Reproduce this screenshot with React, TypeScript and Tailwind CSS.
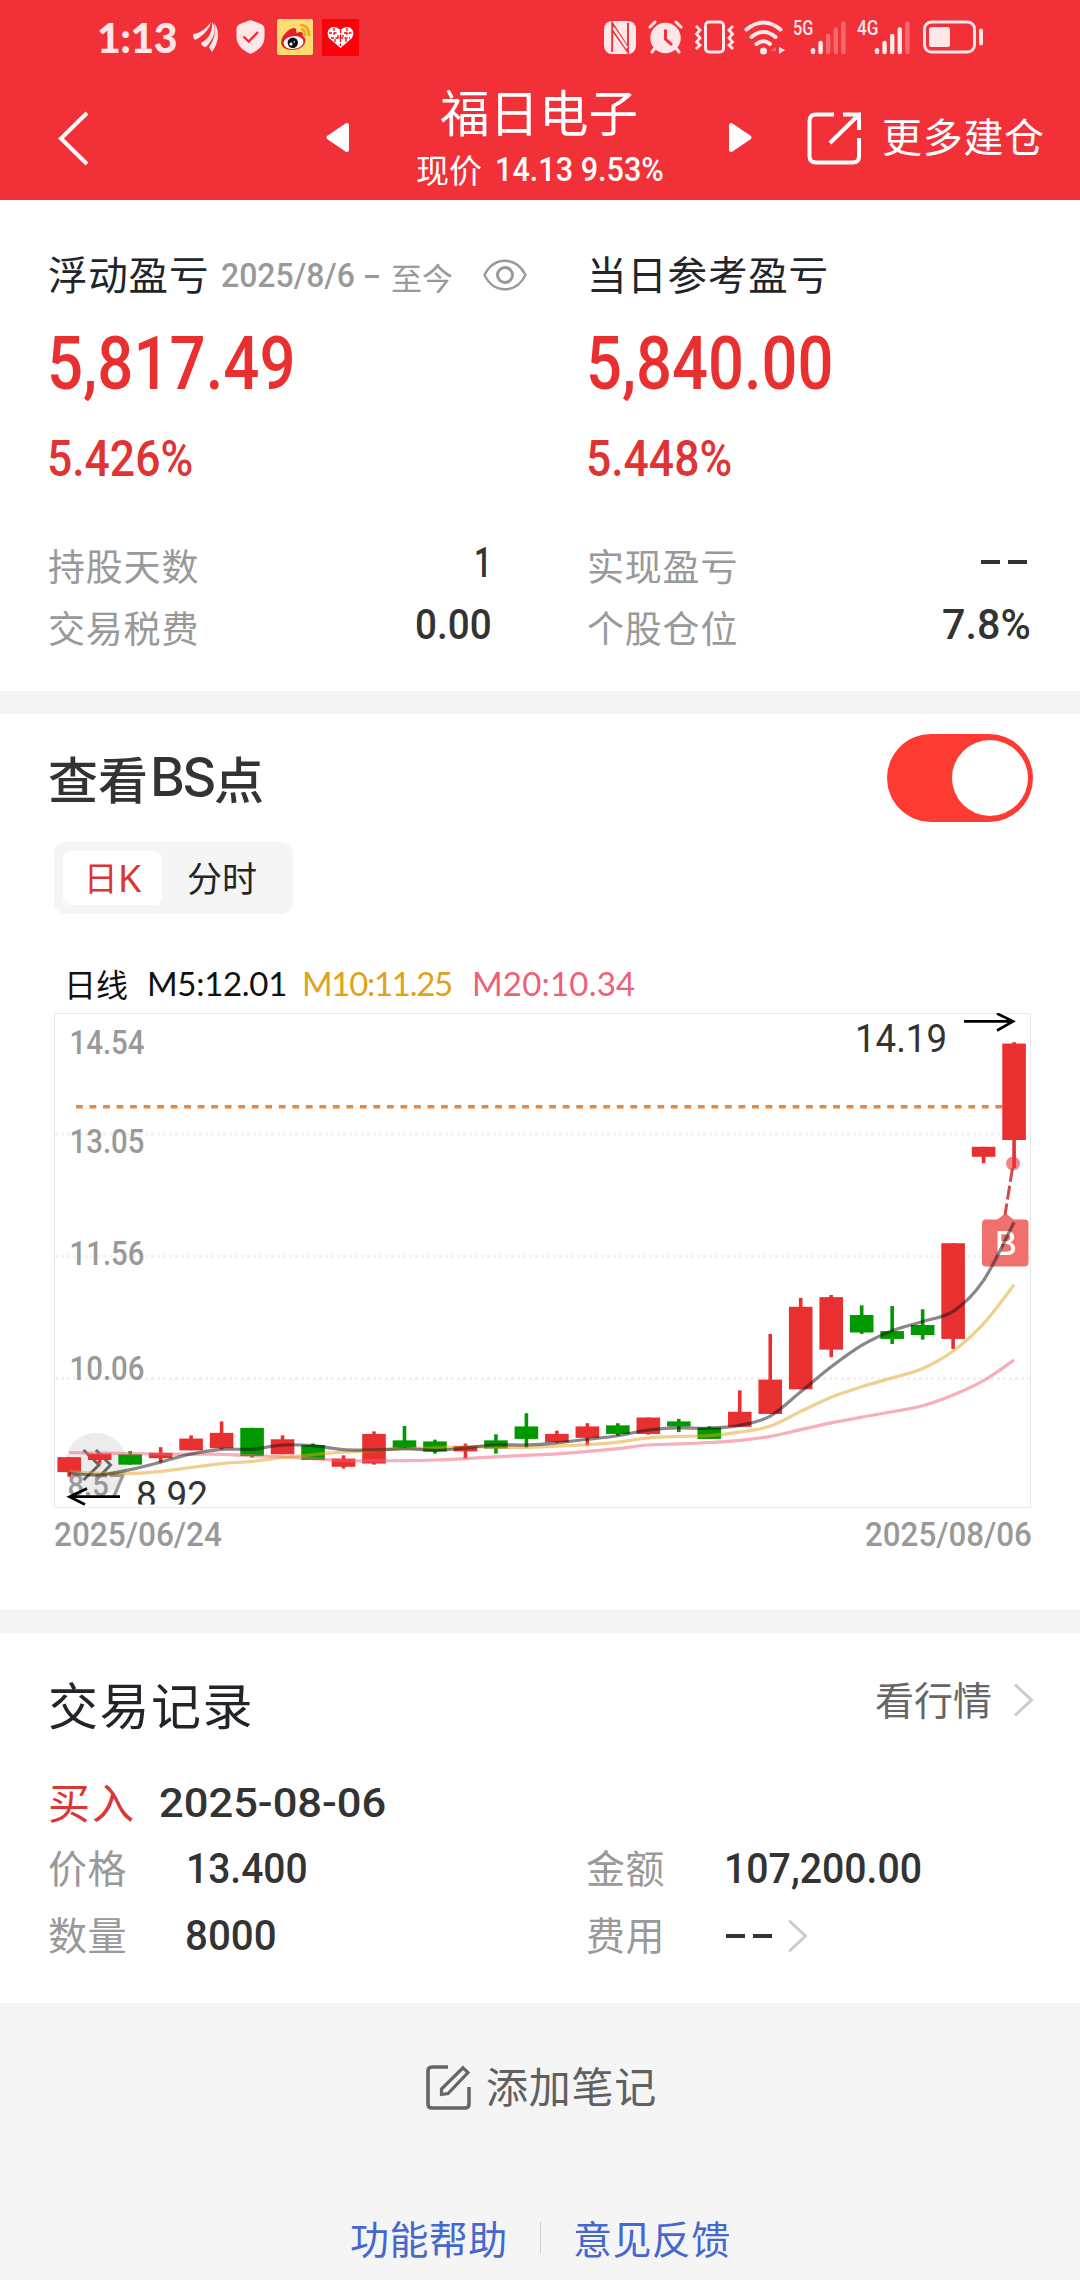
import React from "react";

const ADVANCE: Record<string, number> = {
  ".": 0.276, ",": 0.214, "%": 0.737, "/": 0.39, "-": 0.36, " ": 0.25, "–": 0.56,
};

/* Condensed figures: text of a given size squeezed to the given ink width. */
function Num({ text, size, width, className = "" }: { text: string; size: number; width: number; className?: string }) {
  const natural = [...text].reduce((sum, c) => sum + (ADVANCE[c] ?? 0.568), 0) * size;
  const bearing = size * 0.045;
  const k = width / (natural - bearing * 2);
  return (
    <span className={"block shrink-0 whitespace-nowrap font-['Roboto',sans-serif] font-medium leading-none " + className} style={{ width, fontSize: size }}>
      <span className="block origin-left" style={{ transform: `scaleX(${k})`, marginLeft: -bearing * k }}>{text}</span>
    </span>
  );
}

function Dashes({ className = "" }: { className?: string }) {
  return (
    <span className={"flex gap-2 " + className} aria-label="--">
      <span className="h-[4px] w-[19px] bg-[#333]" />
      <span className="h-[4px] w-[19px] bg-[#333]" />
    </span>
  );
}

function Bars({ lit }: { lit: number }) {
  return (
    <svg width="36" height="36" viewBox="0 0 36 36" stroke="#fff" strokeWidth="4.4" strokeLinecap="round">
      {[31.2, 24, 17, 10.5, 4.5].map((y, i) => (
        <line key={i} x1={3 + i * 7.6} x2={3 + i * 7.6} y1={y} y2="33" opacity={i < lit ? 0.9 : 0.28} />
      ))}
    </svg>
  );
}

function StatusBar() {
  return (
    <div className="flex h-[74px] items-center pl-[97px] text-[#ffe6e8]">
      <span className="w-[83px] font-['Lato',sans-serif] text-[41px] font-black leading-none tracking-[-0.5px]">1:13</span>
      <svg className="ml-[12px]" width="27" height="32" viewBox="0 0 27 32" fill="currentColor">
        <path d="M1 13C10 12 15 6 19 1C17 10 9 16 3 19Q1 17 1 13Z" />
        <path d="M9 22C17 18 21 10 20 1C25 8 22 18 14 26Q10 26 9 22Z" />
        <path d="M17 26C22 20 24 12 22 2C28 9 27 22 20 31Z" />
      </svg>
      <svg className="ml-[17px]" width="29" height="34" viewBox="0 0 29 34">
        <path d="M14.5 0L25 4Q28.5 5.500 28.500 9V17C28.500 26 21 31 14.500 34C8 31 .5 26 .5 17V9Q.5 5.500 4 4Z" fill="currentColor" />
        <path d="M7.500 16.500L12.700 21.500L22 12" fill="none" stroke="#f02f38" strokeWidth="2.400" />
      </svg>
      <svg className="ml-[12px]" width="36" height="36" viewBox="0 0 36 36">
        <rect width="36" height="36" rx="2" fill="#fedc72" />
        <path d="M23 6Q32 6 32 17M24 10Q28.500 10.500 28 17" fill="none" stroke="#e8a92a" strokeWidth="2.600" />
        <path d="M17 9C20 9 19 13 19.500 14C24 12 27 13 25.500 17C30 19 29 25 25 28C20 32 10 32 6 28C0 21 11 9 17 9Z" fill="#e31f27" />
        <ellipse cx="16.500" cy="23.500" rx="10" ry="6.400" fill="#fff" transform="rotate(-6 16.500 23.500)" />
        <circle cx="15.800" cy="23.800" r="5.200" fill="#111" />
        <circle cx="14" cy="25" r="1.600" fill="#fff" />
        <circle cx="17.300" cy="23" r=".8" fill="#fff" />
      </svg>
      <svg className="ml-[9px]" width="37" height="37" viewBox="0 0 37 37">
        <rect width="37" height="37" fill="#f9020a" />
        <path d="M18.500 29L7 19Q3.500 12 9 8.500Q14 6.500 18.500 11Q23 6.500 28 8.500Q33.500 12 30 19Z" fill="#fff" />
        <path d="M18.500 11V27M7 14H15M22 14H31M9 19H28M12 9V16M25 9V16M13 20V24M24 20V24M16 16V19H21V16" fill="none" stroke="#f9020a" strokeWidth="1.300" strokeDasharray="3 1.500" />
      </svg>

      <svg className="ml-[245px]" width="32" height="33" viewBox="0 0 32 33">
        <rect width="32" height="33" rx="8" fill="currentColor" />
        <path d="M8.200 31V2L24 26.500V9M8.200 9L24 31V2" fill="none" stroke="#f02f38" strokeWidth="1.900" />
        <path d="M9.500 7L23 27" stroke="currentColor" strokeWidth="2.500" />
      </svg>
      <svg className="ml-[12px]" width="35" height="34" viewBox="0 0 35 34">
        <g stroke="currentColor" strokeWidth="3" strokeLinecap="round"><path d="M2 7L7 2M33 7L28 2M7 28L4 32M28 28L31 32" /></g>
        <circle cx="17.500" cy="18" r="15.200" fill="currentColor" />
        <path d="M17.500 9.500V19L24 25" fill="none" stroke="#f02f38" strokeWidth="3" />
      </svg>
      <svg className="ml-[11px]" width="41" height="34" viewBox="0 0 41 34" fill="none" stroke="currentColor" strokeWidth="3">
        <rect x="11.500" y="2" width="18" height="30" rx="3.500" />
        <path d="M2 6L6 10L2.500 14L6 18L2.500 22L6 25L2 29M39 6L35 10L38.500 14L35 18L38.500 22L35 25L39 29" strokeWidth="2.800" />
      </svg>
      <svg className="ml-[9px]" width="41" height="35" viewBox="0 0 41 35" fill="none" stroke="currentColor" strokeWidth="4" strokeLinecap="round">
        <path d="M2.500 9.500Q19.500 -4.500 36.500 9.500M7.500 17Q19.500 7 31.500 17M12.500 24Q19.500 18.500 26 24" />
        <circle cx="19.500" cy="31" r="3.500" fill="currentColor" stroke="none" />
        <path d="M35 27L41 30L35 34Z" fill="currentColor" stroke="none" />
        <path d="M32 27L26 31H32V34Z" fill="currentColor" stroke="none" opacity=".35" />
      </svg>
      <Num text="5G" size={21} width={17} className="mb-[18px] ml-[9px] font-bold" />
      <div className="-ml-px"><Bars lit={2} /></div>
      <Num text="4G" size={21} width={18} className="mb-[18px] ml-[12px] font-bold" />
      <div className="-ml-[2px]"><Bars lit={4} /></div>
      <svg className="ml-[13px]" width="60" height="34" viewBox="0 0 60 34">
        <rect x="1.500" y="2" width="50" height="30" rx="7" fill="none" stroke="currentColor" strokeWidth="3" />
        <rect x="6" y="7" width="21" height="20" rx="2.500" fill="currentColor" />
        <rect x="56" y="8.500" width="4" height="17" rx="2" fill="currentColor" />
      </svg>
    </div>
  );
}

function Header() {
  return (
    <header className="h-[200px] bg-[#f23038] text-white">
      <StatusBar />
      <div className="flex h-[126px] items-start">
        <svg className="ml-[57px] mt-[37px]" width="34" height="56" viewBox="0 0 34 56" fill="none" stroke="#fff" strokeWidth="4">
          <path d="M30 2L4 27.500L30 53" />
        </svg>
        <svg className="ml-[234px] mt-[48px]" width="25" height="31" viewBox="0 0 25 31"><path d="M3.500 15.500L22 3V28Z" fill="#fff" stroke="#fff" strokeWidth="4" strokeLinejoin="round" /></svg>
        <div className="mt-[10px] flex w-[380px] flex-col items-center pr-[2px]">
          <div className="text-[49.500px] leading-[54px]">福日电子</div>
          <div className="mt-[11px] flex h-[40px] items-center gap-[14px]">
            <span className="text-[33px] leading-[40px]">现价</span>
            <Num text="14.13 9.53%" size={33} width={166} />
          </div>
        </div>
        <svg className="ml-[-2px] mt-[48px]" width="25" height="31" viewBox="0 0 25 31"><path d="M21.500 15.500L3 3V28Z" fill="#fff" stroke="#fff" strokeWidth="4" strokeLinejoin="round" /></svg>
        <svg className="ml-[54px] mt-[37px]" width="55" height="55" viewBox="0 0 55 55" fill="none" stroke="#fff" strokeWidth="4">
          <path d="M27 3.500H9Q2.500 3.500 2.500 10V45Q2.500 51.500 9 51.500H46Q52 51.500 52 45V27" />
          <path d="M36 3.500H52V19M52 3.500L23 32" />
        </svg>
        <div className="ml-[20px] mt-[34px] text-[40px] leading-[54px] tracking-[0.7px]">更多建仓</div>
      </div>
    </header>
  );
}

function Row({ label, children }: { label: string; children: React.ReactNode }) {
  return (
    <div className="mb-[2px] flex h-[60px] items-center justify-between pr-[1px]">
      <span className="text-[37px] leading-none tracking-[0.8px] text-[#999]">{label}</span>
      <div className="mb-[6px] text-[#333]">{children}</div>
    </div>
  );
}

function Summary() {
  return (
    <section className="grid h-[491px] grid-cols-[443px_443px] gap-[96px] bg-white px-12 pt-[48px]">
      <div>
        <div className="flex h-[50px] items-center whitespace-nowrap">
          <span className="w-[174px] shrink-0 text-[39.500px] leading-none tracking-[0.8px] text-[#212529]">浮动盈亏</span>
          <div className="mt-[6px] flex w-[232px] shrink-0 items-center text-[#999]">
            <Num text="2025/8/6" size={33.500} width={131} />
            <span className="ml-[12px] h-[3px] w-[14px] bg-[#999]" />
            <span className="ml-[12px] text-[31px] leading-none">至今</span>
          </div>
          <svg className="ml-[29px] mt-[4px] shrink-0" width="44" height="32" viewBox="0 0 44 32" fill="none" stroke="#999" strokeWidth="2.400">
            <path d="M1.500 16C11 -3 33 -3 42.500 16C33 35 11 35 1.500 16Z" />
            <circle cx="22" cy="16" r="7.500" strokeWidth="3" />
          </svg>
        </div>
        <div className="mt-[26px] flex h-[80px] items-center pl-[2px] text-[#e93030]"><Num text="5,817.49" size={74} width={242} /></div>
        <div className="mb-[46px] mt-[25px] flex h-[60px] items-center pl-[1px] text-[#e03434]"><Num text="5.426%" size={50} width={142} /></div>
        <Row label="持股天数"><Num text="1" size={43} width={15} /></Row>
        <Row label="交易税费"><Num text="0.00" size={43} width={73} /></Row>
      </div>
      <div>
        <div className="flex h-[50px] items-center text-[39.500px] leading-none tracking-[0.8px] text-[#212529]">当日参考盈亏</div>
        <div className="mt-[26px] flex h-[80px] items-center pl-[2px] text-[#e93030]"><Num text="5,840.00" size={74} width={241} /></div>
        <div className="mb-[46px] mt-[25px] flex h-[60px] items-center pl-[1px] text-[#e03434]"><Num text="5.448%" size={50} width={142} /></div>
        <Row label="实现盈亏"><Dashes className="pr-[2px]" /></Row>
        <Row label="个股仓位"><Num text="7.8%" size={43} width={85} /></Row>
      </div>
    </section>
  );
}

type Candle = [number, number, number, number, "r" | "g"];
/* body top, body bottom, wick top, wick bottom */
const CANDLES: Candle[] = [
  [1280, 1322, 1280, 1335, "r"], [1270, 1288, 1270, 1298, "r"], [1272, 1301, 1263, 1301, "g"], [1268, 1283, 1252, 1295, "r"],
  [1228, 1261, 1219, 1261, "r"], [1212, 1255, 1180, 1258, "r"], [1198, 1277, 1198, 1281, "g"], [1230, 1272, 1219, 1272, "r"],
  [1246, 1288, 1242, 1288, "g"], [1284, 1307, 1275, 1312, "r"], [1215, 1298, 1208, 1301, "r"], [1233, 1253, 1193, 1253, "g"],
  [1236, 1264, 1231, 1270, "g"], [1249, 1264, 1242, 1284, "r"], [1233, 1256, 1216, 1270, "g"], [1194, 1229, 1157, 1253, "g"],
  [1215, 1238, 1206, 1240, "r"], [1194, 1226, 1185, 1247, "r"], [1191, 1215, 1185, 1220, "g"], [1169, 1215, 1169, 1217, "r"],
  [1180, 1194, 1173, 1210, "g"], [1197, 1229, 1194, 1229, "g"], [1153, 1195, 1093, 1195, "r"], [1063, 1159, 935, 1159, "r"],
  [859, 1090, 834, 1090, "r"], [832, 979, 826, 1000, "r"], [882, 931, 855, 935, "g"], [927, 949, 857, 963, "g"],
  [910, 938, 866, 951, "g"], [681, 949, 681, 977, "r"], [411, 439, 411, 457, "r"], [122, 392, 118, 470, "r"],
];
const MA5 = [1325, 1330, 1315, 1294, 1271, 1258, 1258, 1246, 1248, 1259, 1260, 1256, 1261, 1254, 1246, 1246, 1240, 1230, 1220, 1204, 1198, 1199, 1191, 1165, 1097, 1027, 967, 926, 900, 872, 785, 622];
const MA10 = [1320, 1325, 1326, 1320, 1309, 1298, 1292, 1281, 1273, 1266, 1262, 1256, 1254, 1251, 1252, 1253, 1249, 1245, 1238, 1226, 1222, 1220, 1210, 1193, 1152, 1112, 1083, 1058, 1032, 983, 906, 797];
const MA20 = [1267, 1269, 1270, 1271, 1272, 1272, 1276, 1279, 1284, 1290, 1290, 1290, 1288, 1284, 1279, 1275, 1271, 1264, 1256, 1246, 1243, 1239, 1233, 1222, 1203, 1184, 1168, 1153, 1136, 1106, 1066, 1008];

const cx = (i: number) => 15.2 + i * 30.48;
const cy = (v: number) => v / 2.8 - 13;

function smooth(values: number[]) {
  const p = values.map((v, i) => [cx(i), cy(v)]);
  let d = `M${p[0][0]} ${p[0][1]}`;
  for (let i = 0; i < p.length - 1; i++) {
    const a = p[i - 1] ?? p[i], b = p[i], c = p[i + 1], e = p[i + 2] ?? c;
    d += `C${b[0] + (c[0] - a[0]) / 6} ${b[1] + (c[1] - a[1]) / 6} ${c[0] - (e[0] - b[0]) / 6} ${c[1] - (e[1] - b[1]) / 6} ${c[0]} ${c[1]}`;
  }
  return d;
}

function Chart() {
  const labels: [string, number][] = [["14.54", 41], ["13.05", 140], ["11.56", 252], ["10.06", 367]];
  return (
    <svg className="block font-['Roboto',sans-serif]" width="977" height="495" viewBox="0 0 977 495">
      <rect x=".5" y=".5" width="976" height="494" fill="#fff" stroke="#e9e9e9" strokeWidth="1" />
      {[121.3, 243.4, 365.6].map((y) => (
        <line key={y} x1="1" x2="976" y1={y} y2={y} stroke="#f2f2f2" strokeWidth="3" strokeDasharray="3 3" />
      ))}
      <line x1="22" x2="948" y1="93.800" y2="93.800" stroke="#e8883a" strokeWidth="3.400" strokeDasharray="6.800 6.720" />
      <g fill="#999" fontWeight="500" fontSize="33">
        {labels.map(([t, y]) => (
          <text key={t} x="15.500" y={y} textLength="75" lengthAdjust="spacingAndGlyphs">{t}</text>
        ))}
      </g>
      <circle cx="42.300" cy="451" r="31" fill="#ececec" />
      <path d="M29.500 437L45 452L29.500 467M42 437L56.500 452L42 467" fill="none" stroke="#666" strokeWidth="3" />
      <text x="13.500" y="482.500" fontSize="31" fontWeight="500" fill="#999" textLength="58" lengthAdjust="spacingAndGlyphs">8.57</text>

      <g fill="#f0706e">
        <path d="M943 207L951.500 200L960 207Z" />
        <rect x="928" y="206.500" width="46.500" height="47" rx="4" />
        <circle cx="959" cy="150.500" r="7" opacity=".85" />
      </g>
      <text x="941" y="242.400" fontSize="33" fontWeight="500" fill="#fff" fontFamily="Inter">B</text>
      {CANDLES.map(([t, b, wt, wb, c], i) => (
        <g key={i} fill={c === "r" ? "#e93030" : "#009a00"}>
          <rect x={cx(i) - 1.8} y={cy(wt)} width="3.600" height={cy(wb) - cy(wt)} />
          <rect x={cx(i) - 11.8} y={cy(t)} width="23.600" height={cy(b) - cy(t)} />
        </g>
      ))}
      <path d="M958.500 155L951 202" stroke="#d04a4c" strokeWidth="3" strokeDasharray="14 4" />
      <g fill="none" strokeWidth="3.200">
        <path d={smooth(MA20)} stroke="#ed6078" strokeOpacity=".5" />
        <path d={smooth(MA10)} stroke="#e0a21b" strokeOpacity=".5" />
        <path d={smooth(MA5)} stroke="#111" strokeOpacity=".5" />
      </g>

      <g fill="none" stroke="#000" strokeWidth="2.700">
        <path d="M910 8.400H959M943 .5L959 8.400L943 17.500" />
        <path d="M66 483.700H15.500M33 475.500L15.500 483.700L31 491.500" />
      </g>
      <g fill="#333" fontSize="39">
        <text x="801" y="38.500" textLength="92" lengthAdjust="spacingAndGlyphs">14.19</text>
        <svg x="0" y="0" width="300" height="491.500">
          <text x="82" y="496" textLength="72" lengthAdjust="spacingAndGlyphs">8.92</text>
        </svg>
      </g>
    </svg>
  );
}

function ChartSection() {
  return (
    <section className="h-[896px] bg-white px-12">
      <div className="flex h-[128px] items-center justify-between">
        <h2 className="flex items-center pb-[2px] text-[50px] font-medium leading-none text-[#333]">
          查看<span className="ml-[2px] font-['Inter',sans-serif] text-[53px] tracking-[-2.5px]">BS</span><span>点</span>
        </h2>
        <button className="-mr-[1px] flex h-[88px] w-[146px] items-center justify-end rounded-full bg-[#fe3b30] pr-[5px]">
          <span className="h-[76px] w-[76px] rounded-full bg-white" />
        </button>
      </div>
      <div className="ml-[6px] flex h-[72px] w-[239px] items-center rounded-xl bg-[#f5f5f5] px-[9px] text-[34px] leading-none">
        <div className="flex h-[54px] w-[99px] items-center justify-center rounded-lg bg-white pb-[3px] text-[#d93636]">
          日<span className="font-['Noto_Sans',sans-serif] text-[38px]">K</span>
        </div>
        <div className="w-[120px] pb-[3px] text-center text-[35px] text-[#212529]">分时</div>
      </div>
      <div className="ml-[16px] mt-[42px] flex h-[57px] items-center pb-[2px] text-[32px] leading-none text-[#111]">
        <span className="pb-[2px]">日线</span>
        <span className="ml-[19px] w-[155px] font-['Lato',sans-serif] text-[33px] tracking-[-0.3px]">M5:12.01</span>
        <span className="w-[170px] font-['Lato',sans-serif] text-[33px] tracking-[-1.3px] text-[#e0a21b]">M10:11.25</span>
        <span className="font-['Lato',sans-serif] text-[33px] tracking-[0.2px] text-[#ed6078]">M20:10.34</span>
      </div>
      <div className="ml-[6px]">
        <Chart />
        <div className="mt-[10px] flex w-[976px] justify-between pl-[1px] text-[#999]">
          <Num text="2025/06/24" size={33} width={165} />
          <Num text="2025/08/06" size={33} width={164} />
        </div>
      </div>
    </section>
  );
}

function Chevron() {
  return (
    <svg width="22" height="34" viewBox="0 0 22 34" fill="none" stroke="#ccc" strokeWidth="3"><path d="M2 1.500L18.500 17L2 32.500" /></svg>
  );
}

function Field({ label, children }: { label: string; children: React.ReactNode }) {
  return (
    <div className="flex h-[67px] items-center">
      <span className="w-[139px] text-[39px] leading-none tracking-[0.5px] text-[#999]">{label}</span>
      <div className="flex items-center pt-[4px] text-[#333]">{children}</div>
    </div>
  );
}

function Records() {
  return (
    <section className="h-[370px] bg-white px-12">
      <div className="flex h-[142px] items-center justify-between">
        <h2 className="pb-[2px] text-[50px] leading-none tracking-[1.5px] text-[#212529]">交易记录</h2>
        <div className="-mr-[3px] mb-[12px] flex items-center text-[39px] leading-none text-[#666]">看行情<span className="ml-[21px] mt-[4px]"><Chevron /></span></div>
      </div>
      <div className="mt-[-6px] flex h-[64px] items-center">
        <span className="w-[113px] text-[42px] leading-none tracking-[2px] text-[#d93636]">买入</span>
        <Num text="2025-08-06" size={41.500} width={225} className="mt-[4px] text-[#333]" />
      </div>
      <div className="grid grid-cols-[538px_1fr]">
        <Field label="价格"><Num text="13.400" size={43} width={118} className="ml-[1px]" /></Field>
        <Field label="金额"><Num text="107,200.00" size={43} width={194} className="ml-[1px]" /></Field>
        <Field label="数量"><Num text="8000" size={43} width={88} /></Field>
        <Field label="费用"><Dashes className="ml-[1px]" /><span className="ml-[15px]"><Chevron /></span></Field>
      </div>
    </section>
  );
}

function Footer() {
  return (
    <footer className="h-[277px] bg-[#f5f5f5]">
      <div className="flex h-[166px] items-center justify-center gap-[15px] pb-[3px] pl-[3px]">
        <svg className="mt-[6px]" width="45" height="45" viewBox="0 0 45 45" fill="none" stroke="#666" strokeWidth="3.600">
          <path d="M22 2H6Q2 2 2 6V39Q2 43 6 43H39Q43 43 43 39V22" />
          <path d="M37 2.800L42 7.500L22 28.500L15.500 29.500L15.500 24Z" strokeWidth="3.200" />
        </svg>
        <span className="text-[42px] leading-none tracking-[0.7px] text-[#606060]">添加笔记</span>
      </div>
      <div className="mt-[38px] flex h-[60px] items-center justify-center text-[39px] leading-none tracking-[0.4px] text-[#4468cf]">
        <span className="w-[190px]">功能帮助</span>
        <span className="h-[31px] w-px bg-[#ccc]" />
        <span className="w-[189px] pl-[32px] whitespace-nowrap">意见反馈</span>
      </div>
    </footer>
  );
}

export default function App() {
  return (
    <div className="h-[2280px] w-[1080px] overflow-hidden bg-[#f5f5f5] font-['Noto_Sans_CJK_SC',sans-serif]">
      <Header />
      <Summary />
      <div className="h-[23px] bg-[#f4f4f4]" />
      <ChartSection />
      <div className="h-[23px] bg-[#f4f4f4]" />
      <Records />
      <Footer />
    </div>
  );
}
